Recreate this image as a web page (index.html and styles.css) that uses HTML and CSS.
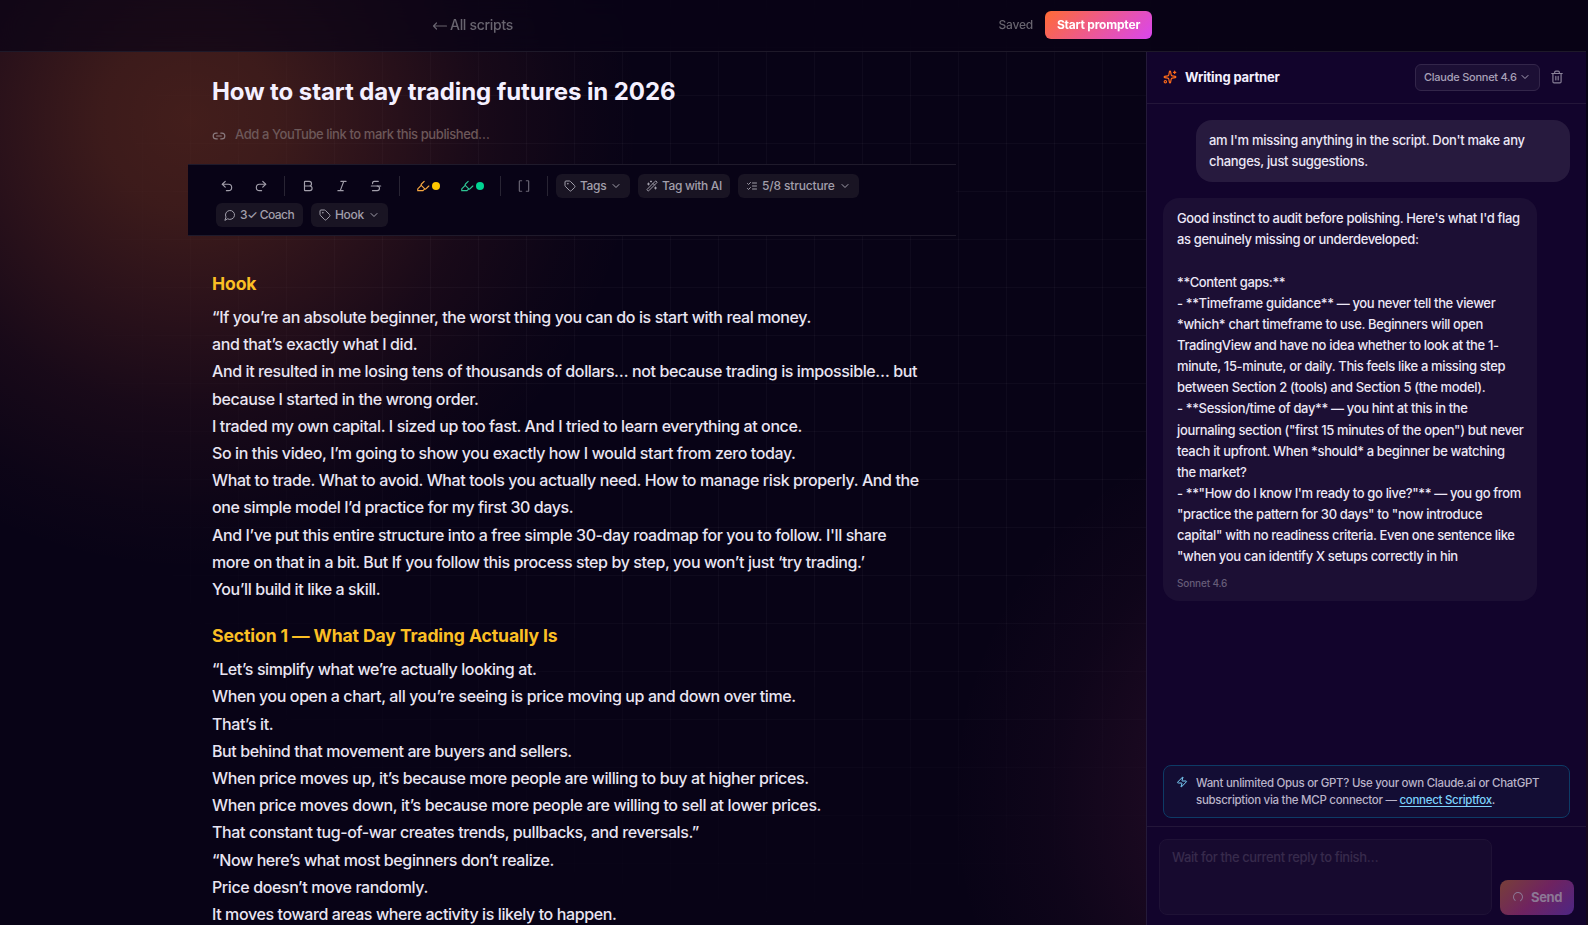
FILE: index.html
```html
<!DOCTYPE html>
<html lang="en">
<head>
    <meta charset="UTF-8">
    <meta name="viewport" content="width=device-width, initial-scale=1.0">
    <title>How to start day trading futures in 2026 - Scriptfox</title>
    <link rel="stylesheet" href="styles.css">
</head>
<body>

<!-- Icons -->
<svg class="sprite">
    <symbol id="undo" viewBox="0 0 24 24"><path d="M9 14 4 9l5-5"/><path d="M4 9h10.5a5.5 5.5 0 0 1 0 11H11"/></symbol>
    <symbol id="redo" viewBox="0 0 24 24"><path d="m15 14 5-5-5-5"/><path d="M20 9H9.500a5.500 5.500 0 0 0 0 11H13"/></symbol>
    <symbol id="bold" viewBox="0 0 24 24"><path d="M6 12h9a4 4 0 0 1 0 8H7a1 1 0 0 1-1-1V5a1 1 0 0 1 1-1h7a4 4 0 0 1 0 8"/></symbol>
    <symbol id="italic" viewBox="0 0 24 24"><path d="M19 4h-9M14 20H5M15 4 9 20"/></symbol>
    <symbol id="strike" viewBox="0 0 24 24"><path d="M16 4H9a3 3 0 0 0-2.830 4"/><path d="M14 12a4 4 0 0 1 0 8H6"/><path d="M4 12h16"/></symbol>
    <symbol id="marker" viewBox="0 0 24 24"><path d="m9 11-6 6v3h9l3-3"/><path d="m22 12-4.600 4.600a2 2 0 0 1-2.800 0l-5.200-5.200a2 2 0 0 1 0-2.800L14 4"/></symbol>
    <symbol id="brackets" viewBox="0 0 24 24"><path d="M16 3h3a1 1 0 0 1 1 1v16a1 1 0 0 1-1 1h-3"/><path d="M8 21H5a1 1 0 0 1-1-1V4a1 1 0 0 1 1-1h3"/></symbol>
    <symbol id="tag" viewBox="0 0 24 24"><path d="M12.586 2.586A2 2 0 0 0 11.172 2H4a2 2 0 0 0-2 2v7.172a2 2 0 0 0 .586 1.414l8.704 8.704a2.426 2.426 0 0 0 3.420 0l6.580-6.580a2.426 2.426 0 0 0 0-3.420z"/><circle cx="7.500" cy="7.500" r=".5"/></symbol>
    <symbol id="wand" viewBox="0 0 24 24"><path d="m21.640 3.640-1.280-1.280a1.210 1.210 0 0 0-1.720 0L2.360 18.640a1.210 1.210 0 0 0 0 1.720l1.280 1.280a1.200 1.200 0 0 0 1.720 0L21.640 5.360a1.200 1.200 0 0 0 0-1.720"/><path d="m14 7 3 3M5 6v4M19 14v4M10 2v2M7 8H3M21 16h-4M11 3H9"/></symbol>
    <symbol id="checks" viewBox="0 0 24 24"><path d="m3 17 2 2 4-4M3 7l2 2 4-4M13 6h8M13 12h8M13 18h8"/></symbol>
    <symbol id="bubble" viewBox="0 0 24 24"><path d="M7.900 20A9 9 0 1 0 4 16.100L2 22Z"/></symbol>
    <symbol id="chevron" viewBox="0 0 24 24"><path d="m6 9 6 6 6-6"/></symbol>
    <symbol id="link" viewBox="0 0 24 24"><path d="M9 17H7A5 5 0 0 1 7 7h2M15 7h2a5 5 0 1 1 0 10h-2M8 12h8"/></symbol>
    <symbol id="sparkles" viewBox="0 0 24 24"><path d="M11.017 2.814a1 1 0 0 1 1.966 0l1.051 5.558a2 2 0 0 0 1.594 1.594l5.558 1.051a1 1 0 0 1 0 1.966l-5.558 1.051a2 2 0 0 0-1.594 1.594l-1.051 5.558a1 1 0 0 1-1.966 0l-1.051-5.558a2 2 0 0 0-1.594-1.594l-5.558-1.051a1 1 0 0 1 0-1.966l5.558-1.051a2 2 0 0 0 1.594-1.594z"/><path d="M20 2v4M22 4h-4"/><circle cx="4" cy="20" r="2"/></symbol>
    <symbol id="trash" viewBox="0 0 24 24"><path d="M10 11v6M14 11v6M19 6v14a2 2 0 0 1-2 2H7a2 2 0 0 1-2-2V6M3 6h18M8 6V4a2 2 0 0 1 2-2h4a2 2 0 0 1 2 2v2"/></symbol>
    <symbol id="zap" viewBox="0 0 24 24"><path d="M4 14a1 1 0 0 1-.78-1.630l9.900-10.200a.5.5 0 0 1 .86.460l-1.920 6.020A1 1 0 0 0 13 10h7a1 1 0 0 1 .78 1.630l-9.900 10.200a.5.5 0 0 1-.86-.460l1.920-6.020A1 1 0 0 0 11 14z"/></symbol>
    <symbol id="loader" viewBox="0 0 24 24"><path d="M21 12a9 9 0 1 1-6.219-8.560"/></symbol>
    <symbol id="arrow" viewBox="0 0 16 14"><path d="M4.500 4 1.500 7l3 3M1.500 7h13"/></symbol>
</svg>

<div class="grid-lines"></div>

<header class="topbar">
    <div class="topbar-inner">
        <a class="back"><svg class="icon arrow"><use href="#arrow"/></svg>All scripts</a>
        <div class="topbar-actions">
            <span class="saved">Saved</span>
            <button class="start">Start prompter</button>
        </div>
    </div>
</header>

<div class="workspace">
    <!-- Editor -->
    <main class="editor">
        <h1 class="title">How to start day trading futures in 2026</h1>
        <div class="publish">
            <svg class="icon"><use href="#link"/></svg>
            <span>Add a YouTube link to mark this published…</span>
        </div>

        <div class="toolbar">
            <div class="tool-row">
                <button class="tool"><svg class="icon"><use href="#undo"/></svg></button>
                <button class="tool"><svg class="icon"><use href="#redo"/></svg></button>
                <span class="sep"></span>
                <button class="tool"><svg class="icon"><use href="#bold"/></svg></button>
                <button class="tool"><svg class="icon"><use href="#italic"/></svg></button>
                <button class="tool"><svg class="icon"><use href="#strike"/></svg></button>
                <span class="sep"></span>
                <button class="tool mark amber"><svg class="icon"><use href="#marker"/></svg><i class="dot"></i></button>
                <button class="tool mark green"><svg class="icon"><use href="#marker"/></svg><i class="dot"></i></button>
                <span class="sep"></span>
                <button class="tool dim"><svg class="icon"><use href="#brackets"/></svg></button>
                <span class="sep"></span>
                <div class="chips">
                    <button class="chip tags"><svg class="icon small"><use href="#tag"/></svg><span>Tags</span><svg class="icon small chev"><use href="#chevron"/></svg></button>
                    <button class="chip ai"><svg class="icon small"><use href="#wand"/></svg><span>Tag with AI</span></button>
                    <button class="chip structure"><svg class="icon small"><use href="#checks"/></svg><span>5/8 structure</span><svg class="icon small chev"><use href="#chevron"/></svg></button>
                </div>
            </div>
            <div class="chips">
                <button class="chip coach"><svg class="icon small"><use href="#bubble"/></svg><span>3✓ Coach</span></button>
                <button class="chip hook"><svg class="icon small"><use href="#tag"/></svg><span>Hook</span><svg class="icon small chev"><use href="#chevron"/></svg></button>
            </div>
        </div>

        <article class="script">
            <h2>Hook</h2>
            <p>“If you’re an absolute beginner, the worst thing you can do is start with real money.</p>
            <p>and that’s exactly what I did.</p>
            <p>And it resulted in me losing tens of thousands of dollars… not because trading is impossible… but<br>because I started in the wrong order.</p>
            <p>I traded my own capital. I sized up too fast. And I tried to learn everything at once.</p>
            <p>So in this video, I’m going to show you exactly how I would start from zero today.</p>
            <p>What to trade. What to avoid. What tools you actually need. How to manage risk properly. And the<br>one simple model I’d practice for my first 30 days.</p>
            <p>And I’ve put this entire structure into a free simple 30-day roadmap for you to follow. I'll share<br>more on that in a bit. But If you follow this process step by step, you won’t just ‘try trading.’</p>
            <p>You’ll build it like a skill.</p>

            <h2>Section 1 — What Day Trading Actually Is</h2>
            <p>“Let’s simplify what we’re actually looking at.</p>
            <p>When you open a chart, all you’re seeing is price moving up and down over time.</p>
            <p>That’s it.</p>
            <p>But behind that movement are buyers and sellers.</p>
            <p>When price moves up, it’s because more people are willing to buy at higher prices.</p>
            <p>When price moves down, it’s because more people are willing to sell at lower prices.</p>
            <p>That constant tug-of-war creates trends, pullbacks, and reversals.”</p>
            <p>“Now here’s what most beginners don’t realize.</p>
            <p>Price doesn’t move randomly.</p>
            <p>It moves toward areas where activity is likely to happen.</p>
        </article>
    </main>

    <!-- Writing partner -->
    <aside class="partner">
        <div class="partner-head">
            <svg class="icon spark"><use href="#sparkles"/></svg>
            <h3>Writing partner</h3>
            <button class="model"><span>Claude Sonnet 4.6</span><svg class="icon small chev"><use href="#chevron"/></svg></button>
            <svg class="icon trash"><use href="#trash"/></svg>
        </div>

        <div class="messages">
            <div class="msg user">am I'm missing anything in the script. Don't make any<br>changes, just suggestions.</div>
            <div class="msg reply">Good instinct to audit before polishing. Here's what I'd flag<br>as genuinely missing or underdeveloped:<br><br>**Content gaps:**<br>- **Timeframe guidance** — you never tell the viewer<br>*which* chart timeframe to use. Beginners will open<br>TradingView and have no idea whether to look at the 1-<br>minute, 15-minute, or daily. This feels like a missing step<br>between Section 2 (tools) and Section 5 (the model).<br>- **Session/time of day** — you hint at this in the<br>journaling section ("first 15 minutes of the open") but never<br>teach it upfront. When *should* a beginner be watching<br>the market?<br>- **"How do I know I'm ready to go live?"** — you go from<br>"practice the pattern for 30 days" to "now introduce<br>capital" with no readiness criteria. Even one sentence like<br>"when you can identify X setups correctly in hin
                <div class="by">Sonnet 4.6</div>
            </div>
        </div>

        <div class="notice">
            <svg class="icon small"><use href="#zap"/></svg>
            <p>Want unlimited Opus or GPT? Use your own Claude.ai or ChatGPT<br>subscription via the MCP connector — <a>connect Scriptfox</a>.</p>
        </div>

        <div class="composer">
            <div class="input">Wait for the current reply to finish…</div>
            <button class="send"><svg class="icon small"><use href="#loader"/></svg>Send</button>
        </div>
    </aside>
</div>

</body>
</html>
```
FILE: styles.css
```css
* {
    box-sizing: border-box;
}

body {
    margin: 0;
    height: 925px;
    padding-right: 2px;
    overflow: hidden;
    display: flex;
    flex-direction: column;
    font-family: Inter, "Liberation Sans", sans-serif;
    font-weight: 500;
    color: #f4f0ff;
    white-space: nowrap;
    background-color: #080316;
    background-image:
        radial-gradient(circle at 190px 120px, rgba(255,115,45,0.24), rgba(255,115,45,0.21) 90px, rgba(255,107,53,0.14) 190px, rgba(255,100,60,0.065) 290px, rgba(255,100,60,0.018) 390px, transparent 450px),
        radial-gradient(circle at 1350px 800px, rgba(217,70,180,0.15), rgba(217,70,140,0.085) 205px, rgba(217,70,140,0.03) 300px, transparent 400px);
}

/* faint grid that fades out towards the edges */
.grid-lines {
    position: absolute;
    inset: 0;
    z-index: -1;
    background-image:
        linear-gradient(to right, rgba(255,255,255,0.03) 1px, transparent 1px),
        linear-gradient(to bottom, rgba(255,255,255,0.03) 1px, transparent 1px);
    background-size: 48px 48px;
    background-position: -2px -1px;
    -webkit-mask-image: radial-gradient(ellipse 900px 760px at 793px 320px, #000 40%, transparent 85%);
    mask-image: radial-gradient(ellipse 900px 760px at 793px 320px, #000 40%, transparent 85%);
}

h1, h2, h3, p {
    margin: 0;
}

button {
    display: flex;
    align-items: center;
    padding: 0;
    border: 0;
    background: none;
    font: inherit;
    color: inherit;
    flex-shrink: 0;
}

.sprite {
    display: none;
}

.icon {
    width: 14px;
    height: 14px;
    flex-shrink: 0;
    fill: none;
    stroke: currentColor;
    stroke-width: 2;
    stroke-linecap: round;
    stroke-linejoin: round;
}

.icon.small {
    width: 12px;
    height: 12px;
}

/* Top bar */
.topbar {
    height: 52px;
    flex-shrink: 0;
    border-bottom: 1px solid #1e1929;
    background: rgba(8,3,22,0.7);
    backdrop-filter: blur(12px);
}

.topbar-inner {
    width: 720px;
    height: 50px;
    margin: 0 auto;
    position: relative;
    left: -1px;
    display: flex;
    align-items: center;
    justify-content: space-between;
}

.back {
    padding-bottom: 1px;
    display: flex;
    align-items: center;
    gap: 2px;
    font-size: 14px;
    letter-spacing: -0.3px;
    color: #68646f;
}

.icon.arrow {
    width: 16px;
    position: relative;
    top: 1px;
    stroke-width: 1.2;
}

.topbar-actions {
    display: flex;
    align-items: center;
    gap: 12px;
}

.saved {
    padding-bottom: 1px;
    font-size: 12px;
    letter-spacing: -0.2px;
    color: #68646f;
}

.start {
    width: 107px;
    height: 28px;
    padding-bottom: 1px;
    justify-content: center;
    border-radius: 6px;
    background: linear-gradient(135deg, #ff6b35, #d946ef);
    font-size: 12px;
    font-weight: 700;
    letter-spacing: -0.2px;
    color: #fff;
}

.workspace {
    flex: 1;
    min-height: 0;
    display: flex;
}

/* Editor */
.editor {
    flex: 1;
    padding: 24px 0 0 188px;
    overflow: hidden;
}

.title {
    padding-left: 24px;
    font-size: 24px;
    line-height: 32px;
    font-weight: 650;
    letter-spacing: -0.08px;
}

.publish {
    height: 56px;
    padding: 0 0 4px 24px;
    display: flex;
    align-items: center;
    gap: 9px;
    font-size: 13px;
    letter-spacing: -0.4px;
    color: #6d5859;
}

.publish .icon {
    position: relative;
    top: 2px;
    color: #8b7b7f;
}

.toolbar {
    width: 768px;
    height: 72px;
    padding: 8px 0 0 28px;
    display: flex;
    flex-direction: column;
    gap: 4px;
    border-top: 1px solid #1f1a2b;
    border-bottom: 1px solid #1f1a2b;
    background: #080316;
    color: #a29fab;
}

.tool-row {
    height: 26px;
    display: flex;
    align-items: center;
    gap: 12px;
}

.tool {
    width: 22px;
    height: 26px;
    justify-content: center;
}

.tool.dim {
    color: #6b6776;
}

.tool.mark {
    width: 32px;
    gap: 2px;
}

.amber {
    color: #f5a742;
}

.green {
    color: #2fc493;
}

.dot {
    width: 8px;
    height: 8px;
    border-radius: 50%;
}

.amber .dot {
    background: #ffc800;
}

.green .dot {
    background: #00d492;
}

.sep {
    width: 1px;
    height: 20px;
    background: #282433;
}

.chips {
    display: flex;
    gap: 8px;
}

.tool-row .chips {
    margin-left: -4px;
}

.chip {
    height: 24px;
    padding: 0 8px 1px;
    gap: 4px;
    border-radius: 6px;
    background: #191423;
    font-size: 12px;
    font-weight: 550;
    letter-spacing: -0.35px;
}

.chip .chev {
    margin-left: auto;
}

.tags { width: 74px; }
.ai { width: 92px; }
.structure { width: 121px; letter-spacing: -0.15px; }
.coach { width: 87px; letter-spacing: -0.55px; }
.hook { width: 77px; }

.script {
    padding: 34px 0 0 24px;
    font-size: 16px;
    line-height: 27.2px;
    letter-spacing: -0.395px;
    color: #e9e5f2;
}

.script h2 {
    margin: 19px 0 6px;
    font-size: 17.6px;
    line-height: 28px;
    font-weight: 700;
    letter-spacing: -0.12px;
    color: #fbbf24;
}

.script h2:first-child {
    margin-top: 0;
}

/* Writing partner panel */
.partner {
    width: 440px;
    flex-shrink: 0;
    display: flex;
    flex-direction: column;
    border-left: 1px solid #241a3a;
    background: #12042c;
}

.partner-head {
    height: 52px;
    padding: 0 22px 1px 16px;
    display: flex;
    align-items: center;
    border-bottom: 1px solid #231639;
}

.spark {
    color: #ff6b1a;
}

.partner-head h3 {
    margin-left: 8px;
    font-size: 13px;
    font-weight: 650;
    letter-spacing: -0.15px;
}

.model {
    width: 125px;
    height: 27px;
    margin-left: auto;
    padding: 0 8px;
    justify-content: space-between;
    border: 1px solid #33264a;
    border-radius: 6px;
    background: #1c0f35;
    font-size: 11px;
    letter-spacing: -0.25px;
    color: #a9a1b8;
}

.trash {
    margin-left: 10px;
    color: #8a8299;
}

.messages {
    flex: 1;
    padding: 16px;
    display: flex;
    flex-direction: column;
    gap: 16px;
}

.msg {
    width: 374px;
    padding: 10px 14px;
    border-radius: 16px;
    font-size: 13px;
    line-height: 21.125px;
    letter-spacing: -0.35px;
    color: #ece7f6;
}

.user {
    align-self: flex-end;
    padding-left: 13px;
    background: #271a3e;
    letter-spacing: -0.29px;
}

.reply {
    background: #1c0f34;
}

.by {
    margin-top: 8px;
    font-size: 10px;
    line-height: 16px;
    letter-spacing: -0.15px;
    color: #665c78;
}

.notice {
    height: 53px;
    margin: 0 16px 8px;
    padding: 9px 12px;
    display: flex;
    gap: 8px;
    border: 1px solid #0d3b66;
    border-radius: 8px;
    background: #130d34;
    font-size: 11.5px;
    line-height: 17px;
    letter-spacing: -0.29px;
    color: #b9b3c8;
}

.notice .icon {
    margin-top: 1px;
    color: #7dd3fc;
}

.notice a {
    color: #7dd3fc;
    text-decoration: underline;
    text-underline-offset: 2px;
}

.composer {
    height: 99px;
    padding: 12px 12px 10px;
    display: flex;
    align-items: flex-end;
    gap: 8px;
    border-top: 1px solid #231639;
}

.input {
    width: 333px;
    height: 76px;
    padding: 7px 12px;
    border: 1px solid #1f1236;
    border-radius: 8px;
    background: #170a2f;
    font-size: 13px;
    line-height: 20px;
    letter-spacing: -0.38px;
    color: #372a4c;
}

.send {
    width: 74px;
    height: 35px;
    padding-bottom: 1px;
    justify-content: center;
    gap: 7px;
    border-radius: 8px;
    background: linear-gradient(135deg, #783f38, #6f2360 50%, #4d2684);
    font-size: 13px;
    font-weight: 650;
    letter-spacing: -0.4px;
    color: #8c7795;
}

.send .icon {
    transform: rotate(130deg);
}
```
